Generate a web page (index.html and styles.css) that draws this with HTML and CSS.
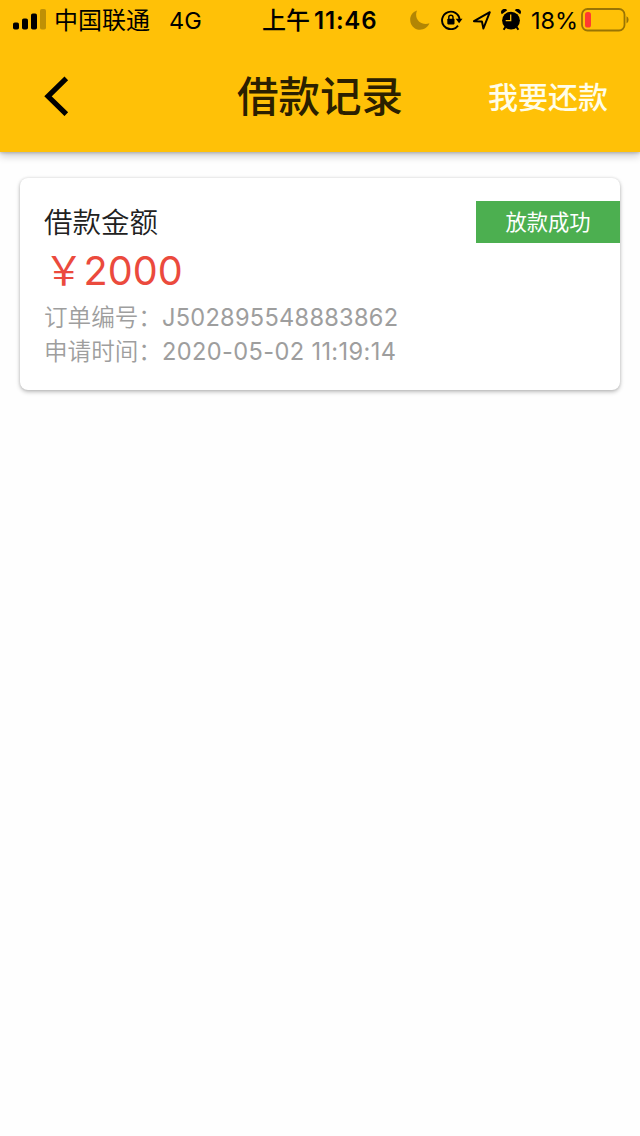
FILE: index.html
```html
<!DOCTYPE html>
<html lang="zh-CN">

  <head>
    <meta charset="utf-8">
    <title>借款记录</title>
    <link rel="stylesheet" href="styles.css">
  </head>

  <body>
    <header class="top">

      <div class="status-bar">
        <div class="status-left">
          <svg class="signal" width="33" height="21" viewBox="0 0 33 21">
            <rect x="0" y="13.5" width="6" height="7" rx="1.8"/>
            <rect x="9" y="9.5" width="6" height="11" rx="1.8"/>
            <rect x="18" y="4.5" width="6" height="16" rx="1.8"/>
            <rect x="27" y="0" width="6" height="20.5" rx="1.8" opacity=".25"/>
          </svg>
          <span class="carrier">中国联通</span>
          <span class="network">4G</span>
        </div>

        <div class="status-time"><span>上午</span><span class="clock">11:46</span></div>

        <div class="status-right">
          <svg class="moon" width="20" height="20" viewBox="0 0 20 20">
            <path d="M7 .6C-1.5 3.5-1.8 14 4.6 18.2C10 21.6 17.2 19.2 19.4 13.3C12 16.4 3.3 9.5 7 .6Z" opacity=".3"/>
          </svg>
          <svg class="lock" width="22" height="20" viewBox="0 0 22 20">
            <path d="M17 15.6A8.8 8.8 0 1 1 18.6 9.5" fill="none" stroke="#000" stroke-width="1.9"/>
            <path d="M14.7 8.7h6.8l-3.4 4.6z"/>
            <rect x="6.3" y="8.7" width="7.2" height="5.7" rx=".8"/>
            <path d="M7.8 9V7.3a2.1 2.1 0 0 1 4.2 0V9" fill="none" stroke="#000" stroke-width="1.4"/>
          </svg>
          <svg class="arrow" width="20" height="20" viewBox="0 0 20 20">
            <path d="M2 11.2L17.8 2.2L11.4 18.5L9.9 11.4Z" fill="none" stroke="#000" stroke-width="2" stroke-linejoin="round"/>
          </svg>
          <svg class="alarm" width="20" height="22" viewBox="0 0 20 22">
            <circle cx="10" cy="11.6" r="8.9"/>
            <path d="M.8 5.2A3.3 3.3 0 0 1 6.2 1.3ZM19.2 5.2A3.3 3.3 0 0 0 13.8 1.3Z"/>
            <path d="M4.5 18L2.6 20.8M15.5 18L17.4 20.8" stroke="#000" stroke-width="2"/>
            <path d="M9.7 5.4V11.7H4.7" fill="none" stroke="#ffc107" stroke-width="1.3"/>
          </svg>
          <span class="percent">18%</span>
          <svg class="battery" width="48" height="24" viewBox="0 0 48 24">
            <rect x="1" y="1" width="42.5" height="21.5" rx="5.5" fill="none" stroke="#000" stroke-opacity=".4" stroke-width="1.8"/>
            <rect x="4" y="4" width="6" height="15.5" rx="2.6" fill="#ff3b30"/>
            <path d="M45.5 8.2Q47.6 9 47.6 11.8T45.5 15.4Z" opacity=".4"/>
          </svg>
        </div>
      </div>

      <nav class="app-bar">
        <svg class="back" width="26" height="40" viewBox="0 0 26 40">
          <path d="M22.3 2.4L4 20.3L22.3 38.2" fill="none" stroke="#000" stroke-width="5.2"/>
        </svg>
        <h1>借款记录</h1>
        <a class="repay">我要还款</a>
      </nav>
    </header>

    <main>
      <section class="card">
        <div class="info">
          <p class="label">借款金额</p>
          <p class="amount">￥2000</p>
          <p class="detail">订单编号：<span class="order">J502895548883862</span></p>
          <p class="detail">申请时间：<span class="date">2020-05-02 11:19:14</span></p>
        </div>
        <div class="state">放款成功</div>
      </section>
    </main>
  </body>

</html>
```
FILE: styles.css
```css
body {
  margin: 0;
  font-family: Inter, "Noto Sans CJK SC", sans-serif;
  background-color: #fefefe;
  color: #212121;
}

h1, p {
  margin: 0;
  font-weight: 400;
}

svg {
  display: block;
  flex: none;
}

.top {
  height: 152px;
  background-color: #ffc107;
  box-shadow: 0 4px 8px rgba(0,0,0,.2), 0 1px 3px rgba(0,0,0,.2);
}

/* status bar */
.status-bar {
  display: grid;
  grid-template-columns: 262px 148px 1fr;
  height: 40px;
  color: #000;
  font-size: 24px;
  line-height: 38px;
  white-space: nowrap;
}

.status-left,
.status-time,
.status-right {
  display: flex;
  align-items: center;
}

.status-bar span {
  padding-top: 2px;
}

.signal {
  margin: 0 9px 1px 13px;
}

.carrier {
  margin-left: -1px;
}

.network {
  margin-left: 19px;
  font-size: 23.5px;
}

.status-time {
  font-weight: 500;
}

.clock {
  margin-left: 4px;
  font-weight: 600;
  letter-spacing: .8px;
}

.lock {
  margin-left: 11px;
}

.arrow {
  margin-left: 9px;
}

.alarm {
  margin: 0 10px 1px 9px;
}

.percent {
  font-size: 23.5px;
}

.battery {
  margin: 0 0 1px 3px;
}

/* app bar */
.app-bar {
  display: grid;
  grid-template-columns: 1fr auto 1fr;
  align-items: center;
  height: 112px;
  padding: 0 32px;
}

.back {
  margin-left: 12px;
}

h1 {
  padding-top: 2px;
  font-size: 41.5px;
  font-weight: 500;
  line-height: 60px;
  color: #2b2000;
}

.repay {
  justify-self: end;
  padding-top: 1px;
  font-size: 30px;
  font-weight: 500;
  line-height: 44px;
  color: #fffde9;
}

/* record */
.card {
  display: flex;
  justify-content: space-between;
  align-items: flex-start;
  box-sizing: border-box;
  height: 212px;
  margin: 26px 20px;
  padding: 23px 0 0 24px;
  border-radius: 8px;
  background-color: #fff;
  box-shadow: 0 2px 4px rgba(0,0,0,.25), 0 0 3px rgba(0,0,0,.12);
}

.label {
  padding-top: 1px;
  font-size: 28.5px;
  font-weight: 350;
  line-height: 42px;
}

.amount {
  padding-bottom: 2px;
  font-size: 39.6px;
  line-height: 55px;
  color: #eb4a3d;
}

.detail {
  font-size: 23.6px;
  font-weight: 350;
  line-height: 34px;
  color: #9e9e9e;
  white-space: nowrap;
}

.order,
.date {
  font-weight: 400;
  letter-spacing: .26px;
}

.date {
  letter-spacing: .37px;
}

.state {
  width: 144px;
  height: 42px;
  line-height: 42px;
  text-align: center;
  font-size: 21.3px;
  color: #fff;
  background-color: #4caf50;
}
```
